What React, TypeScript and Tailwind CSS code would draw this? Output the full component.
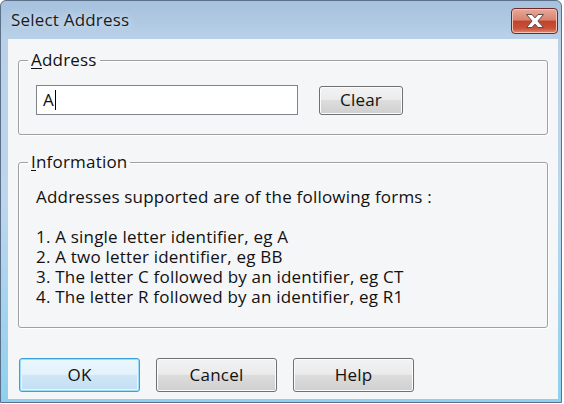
import type { ReactNode } from "react";

const font = { fontFamily: '"Open Sans", "Noto Sans", "Liberation Sans", sans-serif' };

function GroupBox({ label, children, className }: { label: ReactNode; children: ReactNode; className?: string }) {
  return (
    <fieldset
      className={`mx-[10px] rounded-[3px] border border-[#a0a0a0] px-[17px] shadow-[inset_1px_1px_0_#ffffff,1px_1px_0_#ffffff] ${className ?? ""}`}
    >
      <legend className="ml-[-8px] px-[3px] text-[17px] leading-[20px] tracking-[0.2px] text-[#111]">{label}</legend>
      {children}
    </fieldset>
  );
}

function PushButton({ children, isDefault }: { children: ReactNode; isDefault?: boolean }) {
  return (
    <button
      className={`flex h-[34px] w-[121px] items-center justify-center rounded-[3px] border text-[17px] tracking-[0.2px] text-[#111] ${
        isDefault
          ? "border-[#3d9fd8] bg-[linear-gradient(#eaf6fd_0%,#e3f2fb_48%,#cfe6f6_50%,#c3dff3_100%)] shadow-[inset_0_0_0_1px_#9fdcf7,inset_0_0_0_2px_#e6f6fd]"
          : "border-[#707070] bg-[linear-gradient(#f2f2f2_0%,#ebebeb_48%,#dddddd_50%,#cfcfcf_100%)] shadow-[inset_0_0_0_1px_#fcfcfc]"
      }`}
    >
      {children}
    </button>
  );
}

export default function App() {
  return (
    <div className="h-[404px] w-[564px] bg-white" style={font}>
      <div className="flex h-[403px] w-[562px] flex-col rounded-t-[6px] border border-[#5c7189] bg-[linear-gradient(#a6c1dd_0px,#b9d0e8_38px,#bcd6ee_200px,#8fd0ef_403px)]">
        {/* title bar */}
        <div className="flex h-[38px] justify-between pl-[10px] pr-[3px]">
          <span className="self-center text-[17px] tracking-[0.2px] text-[#1c1c1c] [text-shadow:0_0_6px_#e4eef8]">
            Select Address
          </span>
          <button className="mt-[7px] flex h-[26px] w-[47px] items-center justify-center rounded-[4px] border border-[#6e2a24] bg-[linear-gradient(#e9a899_0%,#d88472_45%,#c2432b_52%,#c9513a_80%,#e08a6c_100%)] shadow-[inset_0_0_0_1px_#f2c4b8]">
            <svg width="22" height="16" viewBox="0 0 22 16">
              <path
                d="M2.5 1.5h5.5l3 3.4 3-3.4h5.5l-5.6 6.5 5.6 6.5h-5.5l-3-3.4-3 3.4h-5.5l5.6-6.5z"
                fill="#ffffff"
                stroke="#5a4a48"
                strokeWidth="1"
                strokeLinejoin="round"
              />
            </svg>
          </button>
        </div>

        {/* client area */}
        <div className="mb-[3px] ml-[7px] mr-[3px] flex flex-1 flex-col bg-[#f5f6f8] pt-[11px]">
          <GroupBox
            label={
              <>
                <span className="underline underline-offset-[2px]">A</span>ddress
              </>
            }
            className="pb-[19px] pt-[15px]"
          >
            <div className="flex items-center">
              <div className="flex h-[30px] w-[262px] items-center border border-[#7f838b] bg-white pl-[6px] text-[17px] text-[#111]">
                A<span className="ml-[1px] h-[20px] w-[1px] bg-black" />
              </div>
              <div className="ml-[21px]">
                <button className="flex h-[29px] w-[84px] items-center justify-center rounded-[3px] border border-[#707070] bg-[linear-gradient(#f2f2f2_0%,#ebebeb_48%,#dddddd_50%,#cfcfcf_100%)] text-[17px] tracking-[0.2px] text-[#111] shadow-[inset_0_0_0_1px_#fcfcfc]">
                  Clear
                </button>
              </div>
            </div>
          </GroupBox>

          <GroupBox
            label={
              <>
                <span className="underline underline-offset-[2px]">I</span>nformation
              </>
            }
            className="mt-[17px] pb-[20px] pt-[15px]"
          >
            <div className="text-[17px] leading-[20px] tracking-[0.2px] text-[#111]">
              <p>Addresses supported are of the following forms :</p>
              <p className="mt-[20px]">1. A single letter identifier, eg A</p>
              <p>2. A two letter identifier, eg BB</p>
              <p>3. The letter C followed by an identifier, eg CT</p>
              <p>4. The letter R followed by an identifier, eg R1</p>
            </div>
          </GroupBox>

          <div className="ml-[11px] mt-[30px] flex gap-[16px]">
            <PushButton isDefault>OK</PushButton>
            <PushButton>Cancel</PushButton>
            <PushButton>Help</PushButton>
          </div>
        </div>
      </div>
    </div>
  );
}
